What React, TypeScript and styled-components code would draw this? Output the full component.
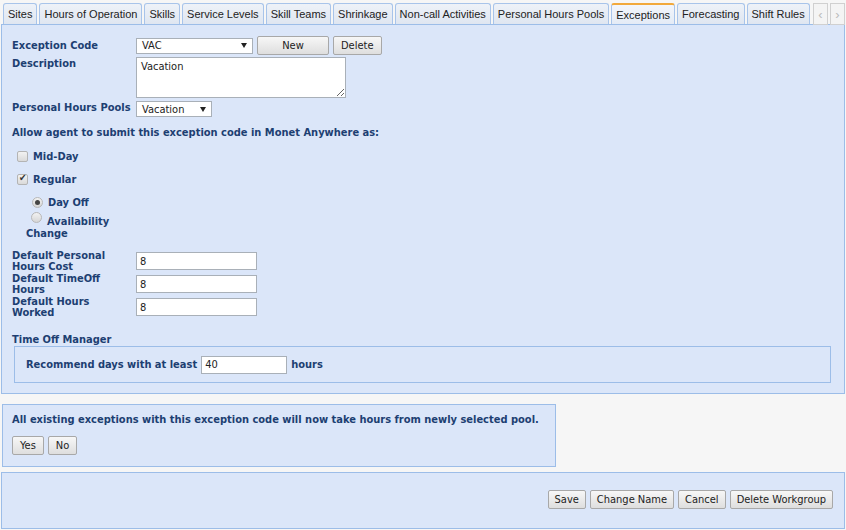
import React from 'react';
import styled, { createGlobalStyle } from 'styled-components';

const GlobalStyle = createGlobalStyle`
  html, body {
    margin: 0;
    padding: 0;
    background: #f6f6f6;
  }
  #root {
    width: 846px;
    height: 530px;
    overflow: hidden;
  }
`;

const ui = `"DejaVu Sans Condensed", "DejaVu Sans", Tahoma, sans-serif`;

const Page = styled.div`
  width: 846px;
  font-family: ${ui};
  font-stretch: condensed;
  font-size: 11px;
`;

const TabBar = styled.div`
  display: flex;
  align-items: flex-end;
  height: 24px;
  padding-left: 3px;
`;

const Tab = styled.div<{ $active?: boolean }>`
  flex-shrink: 0;
  white-space: nowrap;
  height: 21px;
  box-sizing: border-box;
  margin-right: 2px;
  padding: 0 4px;
  display: flex;
  align-items: center;
  font-family: "Liberation Sans", Arial, sans-serif;
  font-stretch: normal;
  font-size: 11px;
  color: #222;
  border: 1px solid #a8c4ea;
  border-bottom: none;
  border-top: ${(p) => (p.$active ? '2px solid #f2a93b' : '1px solid #a8c4ea')};
  border-radius: 3px 3px 0 0;
  background: ${(p) =>
    p.$active
      ? 'linear-gradient(#f3f6fb, #e4ebf6)'
      : 'linear-gradient(#eef2f8, #dfe6f1)'};
`;

const Arrows = styled.div`
  display: flex;
  flex-shrink: 0;
  gap: 2px;
  margin-left: auto;
  margin-right: 1px;
  align-self: flex-start;
  margin-top: 3px;
`;

const Arrow = styled.div`
  width: 13px;
  height: 20px;
  border: 1px solid #d0d0d0;
  background: #f4f4f4;
  color: #bbb;
  font-family: "Liberation Sans", Arial, sans-serif;
  font-size: 13px;
  display: flex;
  align-items: center;
  justify-content: center;
`;

const Panel = styled.div`
  box-sizing: border-box;
  margin: 0 1px;
  border: 1px solid #9cbde8;
  background: #dbe6f9;
`;

const MainPanel = styled(Panel)`
  height: 370px;
  padding: 11px 0 0 10px;
`;

const FormRow = styled.div<{ $top?: number; $align?: string }>`
  display: grid;
  grid-template-columns: 124px auto;
  align-items: ${(p) => p.$align || 'center'};
  margin-top: ${(p) => p.$top ?? 0}px;
`;

const Label = styled.div`
  color: #1d3f72;
  font-weight: bold;
  line-height: 11px;
`;

const Controls = styled.div`
  display: flex;
  align-items: center;
  gap: 4px;
`;

const Select = styled.div<{ $w: number }>`
  width: ${(p) => p.$w}px;
  height: 16px;
  box-sizing: border-box;
  border: 1px solid #a9b0b8;
  background: #fff;
  color: #222;
  padding: 0 5px;
  display: flex;
  align-items: center;
  justify-content: space-between;
`;

const Caret = styled.span`
  width: 0;
  height: 0;
  border-left: 3px solid transparent;
  border-right: 3px solid transparent;
  border-top: 5px solid #222;
`;

const Button = styled.button<{ $w?: number }>`
  height: 19px;
  box-sizing: border-box;
  padding: 0 7px;
  ${(p) => (p.$w ? `width: ${p.$w}px;` : '')}
  font-family: ${ui};
  font-stretch: condensed;
  font-size: 11px;
  color: #222;
  border: 1px solid #a8a8a8;
  border-radius: 2px;
  background: linear-gradient(#f7f7f7, #dedede);
`;

const FooterButton = styled(Button)`
  padding: 0 6px;
`;

const TextArea = styled.textarea`
  width: 210px;
  height: 41px;
  box-sizing: border-box;
  border: 1px solid #a9b0b8;
  padding: 2px 4px;
  font-family: ${ui};
  font-stretch: condensed;
  font-size: 11px;
  color: #222;
  resize: both;
  margin: 0;
  display: block;
`;

const TextInput = styled.input<{ $w: number }>`
  width: ${(p) => p.$w}px;
  height: 18px;
  box-sizing: border-box;
  border: 1px solid #a9b0b8;
  padding: 0 3px;
  font-family: ${ui};
  font-stretch: condensed;
  font-size: 11px;
  color: #222;
  margin: 0;
`;

const Heading = styled(Label)<{ $top: number }>`
  margin-top: ${(p) => p.$top}px;
`;

const OptionRow = styled.div<{ $top: number; $indent: number }>`
  display: flex;
  align-items: center;
  gap: 5px;
  margin-top: ${(p) => p.$top}px;
  padding-left: ${(p) => p.$indent}px;
`;

const Check = styled.span<{ $on?: boolean }>`
  width: 11px;
  height: 11px;
  box-sizing: border-box;
  border: 1px solid #b4b4b4;
  border-radius: 2px;
  background: linear-gradient(#f2f2f2, #dadada);
  position: relative;
  &::after {
    content: ${(p) => (p.$on ? "'✔'" : "''")};
    position: absolute;
    left: 1px;
    top: -3px;
    font-size: 10px;
    color: #333;
  }
`;

const Radio = styled.span<{ $on?: boolean }>`
  width: 11px;
  height: 11px;
  box-sizing: border-box;
  border: 1px solid #b8b8b8;
  border-radius: 50%;
  background: linear-gradient(#f2f2f2, #d6d6d6);
  display: flex;
  align-items: center;
  justify-content: center;
  &::after {
    content: '';
    width: 5px;
    height: 5px;
    border-radius: 50%;
    background: ${(p) => (p.$on ? '#444' : 'transparent')};
  }
`;

const WrapOption = styled.div`
  margin-top: 4px;
  padding-left: 14px;
  width: 100px;
  color: #1d3f72;
  font-weight: bold;
  line-height: 12px;
`;

const WrapRadio = styled(Radio)`
  display: inline-flex;
  vertical-align: 5px;
  margin: 0 5px 0 5px;
`;

const DefaultRow = styled(FormRow)`
  margin-bottom: 1px;
`;

const Fieldset = styled.div`
  box-sizing: border-box;
  width: 817px;
  height: 37px;
  margin: 1px 0 0 2px;
  border: 1px solid #9cbde8;
  padding: 0 0 0 11px;
  display: flex;
  align-items: center;
  gap: 4px;
  color: #1d3f72;
  font-weight: bold;
`;

const Dialog = styled(Panel)`
  width: 554px;
  height: 63px;
  margin: 10px 0 0 2px;
  padding: 9px 0 0 9px;
`;

const DialogText = styled(Label)``;

const DialogButtons = styled.div`
  display: flex;
  gap: 4px;
  margin-top: 11px;
`;

const Footer = styled(Panel)`
  height: 57px;
  margin-top: 5px;
  display: flex;
  justify-content: flex-end;
  align-items: flex-start;
  padding: 17px 11px 0 0;
  gap: 4px;
`;

const tabs = [
  'Sites',
  'Hours of Operation',
  'Skills',
  'Service Levels',
  'Skill Teams',
  'Shrinkage',
  'Non-call Activities',
  'Personal Hours Pools',
  'Exceptions',
  'Forecasting',
  'Shift Rules',
];

const defaults = [
  ['Default Personal', 'Hours Cost'],
  ['Default TimeOff', 'Hours'],
  ['Default Hours', 'Worked'],
];

export default function App() {
  return (
    <Page>
      <GlobalStyle />
      <TabBar>
        {tabs.map((t) => (
          <Tab key={t} $active={t === 'Exceptions'}>
            {t}
          </Tab>
        ))}
        <Arrows>
          <Arrow>‹</Arrow>
          <Arrow>›</Arrow>
        </Arrows>
      </TabBar>

      <MainPanel>
        <FormRow $top={0}>
          <Label>Exception Code</Label>
          <Controls>
            <Select $w={117}>
              VAC <Caret />
            </Select>
            <Button $w={72}>New</Button>
            <Button>Delete</Button>
          </Controls>
        </FormRow>
        <FormRow $top={2} $align="start">
          <Label style={{ paddingTop: 1 }}>Description</Label>
          <TextArea readOnly value="Vacation" />
        </FormRow>
        <FormRow $top={3} $align="start">
          <Label style={{ paddingTop: 1 }}>Personal Hours Pools</Label>
          <Select $w={76}>
            Vacation <Caret />
          </Select>
        </FormRow>

        <Heading $top={10}>Allow agent to submit this exception code in Monet Anywhere as:</Heading>
        <OptionRow $top={13} $indent={5}>
          <Check />
          <Label>Mid-Day</Label>
        </OptionRow>
        <OptionRow $top={12} $indent={5}>
          <Check $on />
          <Label>Regular</Label>
        </OptionRow>
        <OptionRow $top={12} $indent={20}>
          <Radio $on />
          <Label>Day Off</Label>
        </OptionRow>
        <WrapOption>
          <WrapRadio />
          Availability Change
        </WrapOption>

        {defaults.map(([a, b], i) => (
          <DefaultRow key={a} $top={i === 0 ? 10 : 0}>
            <Label>
              {a}
              <br />
              {b}
            </Label>
            <TextInput $w={121} readOnly value="8" />
          </DefaultRow>
        ))}

        <Heading $top={16}>Time Off Manager</Heading>
        <Fieldset>
          Recommend days with at least
          <TextInput $w={86} readOnly value="40" />
          hours
        </Fieldset>
      </MainPanel>

      <Dialog>
        <DialogText>All existing exceptions with this exception code will now take hours from newly selected pool.</DialogText>
        <DialogButtons>
          <Button>Yes</Button>
          <Button>No</Button>
        </DialogButtons>
      </Dialog>

      <Footer>
        <FooterButton>Save</FooterButton>
        <FooterButton>Change Name</FooterButton>
        <FooterButton>Cancel</FooterButton>
        <FooterButton>Delete Workgroup</FooterButton>
      </Footer>
    </Page>
  );
}
